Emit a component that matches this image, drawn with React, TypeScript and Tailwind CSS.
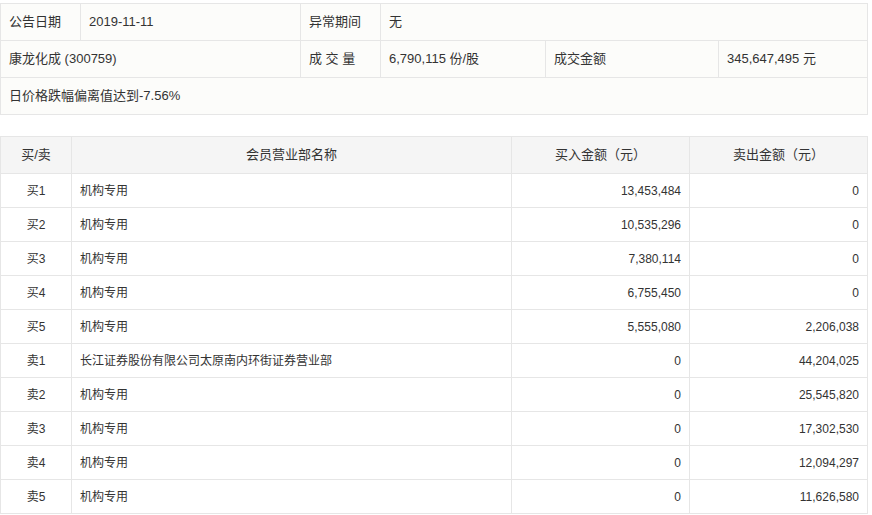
import React from "react";

const rows: [string, string, string, string][] = [
  ["买1", "机构专用", "13,453,484", "0"],
  ["买2", "机构专用", "10,535,296", "0"],
  ["买3", "机构专用", "7,380,114", "0"],
  ["买4", "机构专用", "6,755,450", "0"],
  ["买5", "机构专用", "5,555,080", "2,206,038"],
  ["卖1", "长江证券股份有限公司太原南内环街证券营业部", "0", "44,204,025"],
  ["卖2", "机构专用", "0", "25,545,820"],
  ["卖3", "机构专用", "0", "17,302,530"],
  ["卖4", "机构专用", "0", "12,094,297"],
  ["卖5", "机构专用", "0", "11,626,580"],
];

const td = "border border-[#e6e6e6] px-[8px]";

export default function App() {
  return (
    <div
      className="w-[872px] h-[515px] bg-white text-[13px] text-[#333] pt-[3px] pr-[4px] overflow-hidden"
      style={{ fontFamily: '"Liberation Sans", "Noto Sans CJK SC", sans-serif' }}
    >
      <table className="w-[868px] border-collapse bg-[#fcfcfa] table-fixed">
        <colgroup>
          <col className="w-[80px]" />
          <col className="w-[220px]" />
          <col className="w-[80px]" />
          <col className="w-[165px]" />
          <col className="w-[173px]" />
          <col />
        </colgroup>
        <tbody>
          <tr className="h-[37px]">
            <td className={td}>公告日期</td>
            <td className={td}>2019-11-11</td>
            <td className={td}>异常期间</td>
            <td className={`${td} border-r-0`}>无</td>
            <td className="border-y border-[#e6e6e6]"></td>
            <td className="border-y border-r border-[#e6e6e6]"></td>
          </tr>
          <tr className="h-[37px]">
            <td className={td} colSpan={2}>康龙化成 (300759)</td>
            <td className={td}>成 交 量</td>
            <td className={td}>6,790,115 份/股</td>
            <td className={td}>成交金额</td>
            <td className={td}>345,647,495 元</td>
          </tr>
          <tr className="h-[37px]">
            <td className={td} colSpan={6}>日价格跌幅偏离值达到-7.56%</td>
          </tr>
        </tbody>
      </table>
      <table className="w-[868px] border-collapse table-fixed mt-[21px]">
        <colgroup>
          <col className="w-[71px]" />
          <col className="w-[440px]" />
          <col className="w-[178px]" />
          <col />
        </colgroup>
        <thead>
          <tr className="h-[37px] bg-[#f5f5f5] font-normal">
            <th className={`${td} font-normal`}>买/卖</th>
            <th className={`${td} font-normal`}>会员营业部名称</th>
            <th className={`${td} font-normal`}>买入金额（元）</th>
            <th className={`${td} font-normal`}>卖出金额（元）</th>
          </tr>
        </thead>
        <tbody className="text-[12px]">
          {rows.map((r) => (
            <tr key={r[0]} className="h-[34px]">
              <td className={`${td} text-center`}>{r[0]}</td>
              <td className={`${td} px-[6px]`}>{r[1]}</td>
              <td className={`${td} text-right px-[5px]`}>{r[2]}</td>
              <td className={`${td} text-right px-[5px]`}>{r[3]}</td>
            </tr>
          ))}
        </tbody>
      </table>
    </div>
  );
}
